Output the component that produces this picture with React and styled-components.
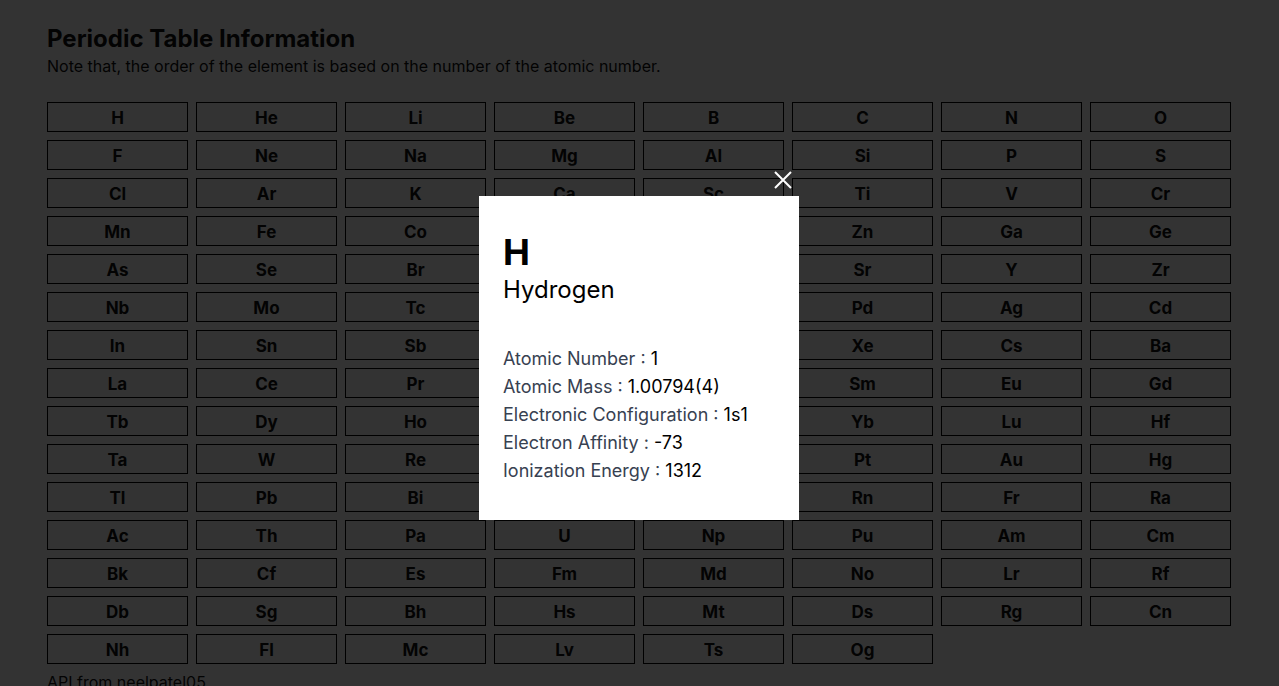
import React from 'react';
import styled, { createGlobalStyle } from 'styled-components';

const elements = [
   'H', 'He', 'Li', 'Be', 'B', 'C', 'N', 'O',
   'F', 'Ne', 'Na', 'Mg', 'Al', 'Si', 'P', 'S',
   'Cl', 'Ar', 'K', 'Ca', 'Sc', 'Ti', 'V', 'Cr',
   'Mn', 'Fe', 'Co', 'Ni', 'Cu', 'Zn', 'Ga', 'Ge',
   'As', 'Se', 'Br', 'Kr', 'Rb', 'Sr', 'Y', 'Zr',
   'Nb', 'Mo', 'Tc', 'Ru', 'Rh', 'Pd', 'Ag', 'Cd',
   'In', 'Sn', 'Sb', 'Te', 'I', 'Xe', 'Cs', 'Ba',
   'La', 'Ce', 'Pr', 'Nd', 'Pm', 'Sm', 'Eu', 'Gd',
   'Tb', 'Dy', 'Ho', 'Er', 'Tm', 'Yb', 'Lu', 'Hf',
   'Ta', 'W', 'Re', 'Os', 'Ir', 'Pt', 'Au', 'Hg',
   'Tl', 'Pb', 'Bi', 'Po', 'At', 'Rn', 'Fr', 'Ra',
   'Ac', 'Th', 'Pa', 'U', 'Np', 'Pu', 'Am', 'Cm',
   'Bk', 'Cf', 'Es', 'Fm', 'Md', 'No', 'Lr', 'Rf',
   'Db', 'Sg', 'Bh', 'Hs', 'Mt', 'Ds', 'Rg', 'Cn',
   'Nh', 'Fl', 'Mc', 'Lv', 'Ts', 'Og',
];

const hydrogen = [
   ['Atomic Number', '1'],
   ['Atomic Mass', '1.00794(4)'],
   ['Electronic Configuration', '1s1'],
   ['Electron Affinity', '-73'],
   ['Ionization Energy', '1312'],
];

export default function App() {
   return (
      <>
         <GlobalStyle />
         <Page>
            <Title>Periodic Table Information</Title>
            <Subtitle>Note that, the order of the element is based on the number of the atomic number.</Subtitle>
            <Grid>
               { elements.map((symbol) => (
                  <Cell key={ symbol }>{ symbol }</Cell>
               )) }
            </Grid>
            <Footer>API from neelpatel05</Footer>
         </Page>
         <Overlay>
            <ModalWrap>
               <Close aria-label='close'>
                  <svg width='18' height='18' viewBox='0 0 18 18'>
                     <path d='M1 1 L17 17 M17 1 L1 17' stroke='#fff' strokeWidth='2' />
                  </svg>
               </Close>
               <Modal>
                  <Symbol>H</Symbol>
                  <Name>Hydrogen</Name>
                  <Info>
                     { hydrogen.map(([label, value]) => (
                        <Line key={ label }>
                           <Label>{ label } : </Label>{ value }
                        </Line>
                     )) }
                  </Info>
               </Modal>
            </ModalWrap>
         </Overlay>
      </>
   );
}

const GlobalStyle = createGlobalStyle`
   body {
      margin: 0;
      overflow: hidden;
      background: #fff;
      font-family: Inter, 'Noto Sans', sans-serif;
      color: #111;
   }
`;

const Page = styled.main`
   width: 1184px;
   margin-left: 47px;
   padding-top: 24px;
`;

const Title = styled.h1`
   margin: 0;
   font-size: 24px;
   font-weight: 700;
   line-height: 30px;
`;

const Subtitle = styled.p`
   margin: 0;
   font-size: 16px;
   line-height: 24px;
`;

const Grid = styled.div`
   display: grid;
   grid-template-columns: repeat(8, 141px);
   grid-auto-rows: 30px;
   gap: 8px;
   margin-top: 24px;
`;

const Cell = styled.button`
   display: flex;
   align-items: center;
   justify-content: center;
   padding: 1px 0 0;
   background: #fff;
   border: 1px solid #000;
   font-family: Inter, 'Noto Sans', sans-serif;
   font-size: 17px;
   font-weight: 700;
   color: #111;
`;

const Footer = styled.p`
   margin: 8px 0 0;
   font-size: 16px;
`;

const Overlay = styled.div`
   position: fixed;
   inset: 0;
   background: rgba(0, 0, 0, 0.8);
   display: flex;
   align-items: flex-start;
   padding: 196px 0 0 479px;
   box-sizing: border-box;
`;

const ModalWrap = styled.div`
   position: relative;
`;

const Close = styled.button`
   position: absolute;
   top: -25px;
   right: 7px;
   padding: 0;
   border: none;
   background: none;
   line-height: 0;
`;

const Modal = styled.section`
   width: 320px;
   height: 324px;
   box-sizing: border-box;
   padding: 36px 24px 24px;
   background: #fff;
   color: #000;
`;

const Symbol = styled.h2`
   margin: 0;
   font-size: 36px;
   font-weight: 700;
   line-height: 40px;
`;

const Name = styled.p`
   margin: 2px 0 0;
   font-size: 24px;
   line-height: 32px;
`;

const Info = styled.div`
   margin-top: 39px;
`;

const Line = styled.p`
   margin: 0;
   font-size: 18px;
   line-height: 28px;
`;

const Label = styled.span`
   color: #374151;
`;
